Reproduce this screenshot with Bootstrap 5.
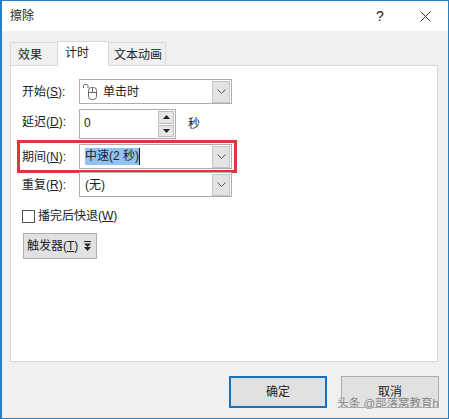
<!DOCTYPE html>
<html lang="zh-CN">
<head>
    <meta charset="UTF-8">
    <meta name="viewport" content="width=device-width, initial-scale=1.0">
    <title>擦除</title>
    <link href="https://cdn.jsdelivr.net/npm/bootstrap@5.3.3/dist/css/bootstrap.min.css" rel="stylesheet">
    <style>
        html, body { height: 100%; overflow: hidden; }
        body { background: #fff; font: 12px/16px "Liberation Sans", "Noto Sans CJK SC", sans-serif; color: #222; }
        u { text-underline-offset: 1px; }

        .dlg { width: 449px; height: 419px; position: relative; border: solid #2a7fc0; border-width: 1px 1px 1px 2px; background: #f0f0f0; }
        .dlg-title { height: 30px; background: #fff; padding: 0 0 0 8px; }
        .dlg-title-txt { font-size: 12px; }
        .help-mark { width: 14px; font-size: 14px; margin-right: 33px; }
        .close-mark { margin-right: 17px; }

        .tab-strip { height: 34px; padding: 10px 0 0 8px; border: 0; align-items: flex-end; }
        .tab-item { height: 23px; padding: 4px 0 0 8px; background: #f0f0f0; border: 1px solid #d9d9d9; border-bottom: 0; margin-right: -1px; }
        .tab-a { width: 48px; padding-left: 7px; }
        .tab-b { width: 52px; height: 25px; background: #fff; padding: 3px 0 0 7px; position: relative; margin-bottom: -1px; z-index: 1; }
        .tab-c { width: 58px; padding-left: 5px; }

        .tab-body { margin-left: 8px; width: 428px; height: 297px; background: #fff; border: 1px solid #d9d9d9; padding: 13px 0 0 11px; }
        .field-row { height: 25px; }
        .field-lbl { width: 57px; flex: none; }
        .combo { width: 153px; height: 25px; flex: none; border: 1px solid #adadad; padding: 0 1px 0 5px; background: #fff; }
        .combo-text { flex: 1; }
        .combo-btn { width: 18px; height: 22px; background: #e3e3e3; border: 1px solid #c4c4c4; }
        .sel-text { background: #90c3f2; height: 17px; line-height: 17px; border-right: 1px solid #111; }
        .mouse-ico { margin: 0 5px 0 -2px; }

        .spin { width: 97px; height: 30px; flex: none; border: 1px solid #adadad; padding: 1px 1px 1px 4px; margin-top: 5px; }
        .spin-btns { width: 16px; gap: 1px; }
        .spin-btn { flex: 1; background: #e6e6e6; border: 1px solid #bbb; }
        .unit-lbl { margin-left: 12px; margin-top: 5px; }

        .hot-row { width: 220px; height: 33px; margin: 1px 0 0 -5px; padding-left: 2px; border: 3px solid #e1343c; }
        .row-gap { margin-top: -1px; }

        .check-box { width: 13px; height: 13px; border: 1px solid #555; background: #fff; margin-right: 3px; }
        .check-row { margin-top: 11px; height: 16px; }
        .trigger-btn { width: 74px; height: 26px; margin-top: 9px; margin-left: 1px; background: #e1e1e1; border: 1px solid #adadad; padding: 0 0 0 3px; }
        .trigger-btn svg { margin-left: 6px; }

        .foot-btn { width: 98px; height: 32px; background: #e1e1e1; border: 1px solid #adadad; }
        .foot-ok { border: 2px solid #1b71b8; margin-right: 14px; }
        .foot { padding: 14px 9px 0 0; }

        .wm { position: absolute; right: 9px; bottom: 7px; font-size: 11.5px; line-height: 16px; color: #808080; white-space: nowrap; text-shadow: 0 0 1px #fff; }
    </style>
</head>
<body>
    <div class="dlg">
        <!-- title bar -->
        <div class="dlg-title d-flex align-items-center">
            <span class="dlg-title-txt flex-grow-1">擦除</span>
            <span class="help-mark text-center">?</span>
            <svg class="close-mark" width="11" height="11" viewBox="0 0 11 11"><path d="M.5.5l10 10M10.5.5l-10 10" stroke="#333" fill="none"/></svg>
        </div>

        <!-- tabs -->
        <div class="nav tab-strip">
            <div class="tab-item tab-a">效果</div>
            <div class="tab-item tab-b">计时</div>
            <div class="tab-item tab-c">文本动画</div>
        </div>

        <div class="tab-body">
            <div class="field-row d-flex align-items-center">
                <span class="field-lbl">开始(<u>S</u>):</span>
                <div class="combo d-flex align-items-center">
                    <svg class="mouse-ico" width="15" height="16" viewBox="0 0 15 16" fill="none" stroke="#666"><path d="M.5 4V1.500C.5.500 1 .5 2 .5h1.500C4.500.5 5 1 5 2v2"/><rect x="5.500" y="3.500" width="8" height="12" rx="3"/><path d="M5.500 8.500h8M9.500 3.500v5"/></svg>
                    <span class="combo-text">单击时</span>
                    <span class="combo-btn d-flex align-items-center justify-content-center">
                        <svg width="9" height="5" viewBox="0 0 9 5"><path d="M.5.500l4 4 4-4" stroke="#555" fill="none"/></svg>
                    </span>
                </div>
            </div>

            <div class="d-flex align-items-center">
                <span class="field-lbl">延迟(<u>D</u>):</span>
                <div class="spin d-flex">
                    <span class="flex-grow-1 pt-1">0</span>
                    <span class="spin-btns d-flex flex-column">
                        <span class="spin-btn d-flex align-items-center justify-content-center"><svg width="7" height="4" viewBox="0 0 7 4"><path d="M3.500 0L7 4H0z" fill="#222"/></svg></span>
                        <span class="spin-btn d-flex align-items-center justify-content-center"><svg width="7" height="4" viewBox="0 0 7 4"><path d="M0 0h7L3.500 4z" fill="#222"/></svg></span>
                    </span>
                </div>
                <span class="unit-lbl">秒</span>
            </div>

            <div class="hot-row d-flex align-items-center">
                <span class="field-lbl">期间(<u>N</u>):</span>
                <div class="combo d-flex align-items-center">
                    <span class="combo-text"><span class="sel-text d-inline-block">中速(2 秒)</span></span>
                    <span class="combo-btn d-flex align-items-center justify-content-center">
                        <svg width="9" height="5" viewBox="0 0 9 5"><path d="M.5.500l4 4 4-4" stroke="#555" fill="none"/></svg>
                    </span>
                </div>
            </div>

            <div class="field-row d-flex align-items-center row-gap">
                <span class="field-lbl">重复(<u>R</u>):</span>
                <div class="combo d-flex align-items-center">
                    <span class="combo-text">(无)</span>
                    <span class="combo-btn d-flex align-items-center justify-content-center">
                        <svg width="9" height="5" viewBox="0 0 9 5"><path d="M.5.500l4 4 4-4" stroke="#555" fill="none"/></svg>
                    </span>
                </div>
            </div>

            <div class="check-row d-flex align-items-center">
                <span class="check-box"></span>
                <span>播完后快退(<u>W</u>)</span>
            </div>

            <div class="trigger-btn d-flex align-items-center">
                <span>触发器(<u>T</u>)</span>
                <svg width="7" height="10" viewBox="0 0 7 10"><path d="M0 0h7v1H0zM0 2.500h7L3.500 6zM0 6h7L3.500 10z" fill="#222"/></svg>
            </div>
        </div>

        <div class="foot d-flex justify-content-end">
            <div class="foot-btn foot-ok d-flex align-items-center justify-content-center">确定</div>
            <div class="foot-btn d-flex align-items-center justify-content-center">取消</div>
        </div>

        <div class="wm">头条 @部落窝教育h</div>
    </div>

    <script src="https://cdn.jsdelivr.net/npm/bootstrap@5.3.3/dist/js/bootstrap.bundle.min.js"></script>
</body>
</html>
